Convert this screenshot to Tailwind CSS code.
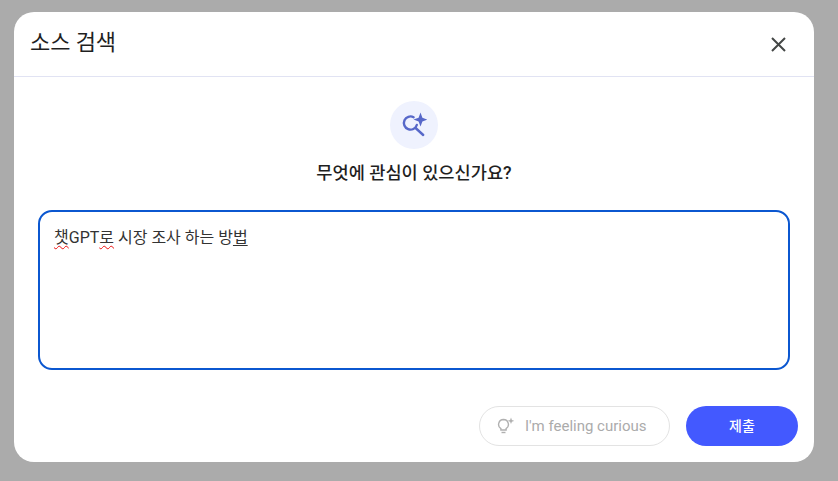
<!DOCTYPE html>
<html lang="ko">
<head>
    <meta charset="UTF-8">
    <title>소스 검색</title>
    <script src="https://cdn.jsdelivr.net/npm/@tailwindcss/browser@4"></script>
</head>
<body class="bg-[#ababab] h-[481px] w-[838px] overflow-hidden font-['Roboto','Noto_Sans_CJK_KR',sans-serif]">
    <div class="pt-3 pl-[14px]">
        <div class="w-[800px] h-[450px] bg-white rounded-[20px] flex flex-col">
            <!-- Header -->
            <div class="h-[65px] shrink-0 flex items-center justify-between pl-4 pr-[27px] border-b border-[#e1e3f3]">
                <h1 class="text-[22px] text-[#1f1f1f] leading-none pb-[2px] tracking-[-0.1px]">소스 검색</h1>
                <svg width="17" height="17" viewBox="0 0 17 17" fill="none" stroke="#444746" stroke-width="2"><path d="M2 2l13 13M15 2L2 15"/></svg>
            </div>

            <!-- Body -->
            <div class="flex flex-col items-center pt-6">
                <div class="w-12 h-12 rounded-full bg-[#eff2fe] flex items-center justify-center">
                    <svg width="26" height="26" viewBox="0 0 26 26" fill="none">
                        <path d="M12.6 5.2A6.6 6.6 0 1 0 15.8 13" stroke="#5768c9" stroke-width="2.4" stroke-linecap="round"/>
                        <path d="M14.6 16l7.6 7" stroke="#5768c9" stroke-width="2.4" stroke-linecap="round"/>
                        <path d="M19.5 .6l1.9 5.1 5.1 1.9-5.1 1.9-1.9 5.1-1.9-5.1-5.1-1.9 5.1-1.9z" fill="#5768c9"/>
                    </svg>
                </div>
                <h2 class="mt-[14px] text-[17.6px] font-medium text-[#1f1f1f] leading-5">무엇에 관심이 있으신가요?</h2>
            </div>

            <!-- Query box -->
            <div class="mt-[27px] mx-6 h-[160px] border-2 border-[#0b57d0] rounded-[14px] px-[14px] pt-[14px] text-[16px] leading-[24px] text-[#333333]">
                <span class="underline decoration-wavy decoration-[#ee1111] decoration-1 underline-offset-2">챗</span>GPT<span class="underline decoration-wavy decoration-[#ee1111] decoration-1 underline-offset-2">로</span> 시장 조사 하는 방<span class="underline underline-offset-2">법</span>
            </div>

            <!-- Footer -->
            <div class="mt-9 flex justify-end items-center gap-4 pr-4">
                <div class="w-[191px] h-10 rounded-full border border-[#e3e3e3] flex items-center pl-[17px] gap-[11px] text-[15px] text-[#ababab]">
                    <svg width="17" height="18" viewBox="0 0 17 18" fill="none" stroke="#b0b0b0" stroke-width="1.4">
                        <path d="M6.5 2.5a5 5 0 0 0-2.6 9.2v1.3h5.2v-1.3a5 5 0 0 0-2.6-9.2z"/>
                        <path d="M4.5 15.5h4"/>
                        <path d="M14 .6l.9 2.3 2.3.9-2.3.9-.9 2.3-.9-2.3-2.3-.9 2.3-.9z" fill="#b0b0b0" stroke="none"/>
                    </svg>
                    <span>I'm feeling curious</span>
                </div>
                <button class="w-[112px] h-10 rounded-full bg-[#4359ff] text-white text-[14px] font-medium">제출</button>
            </div>
        </div>
    </div>
</body>
</html>
